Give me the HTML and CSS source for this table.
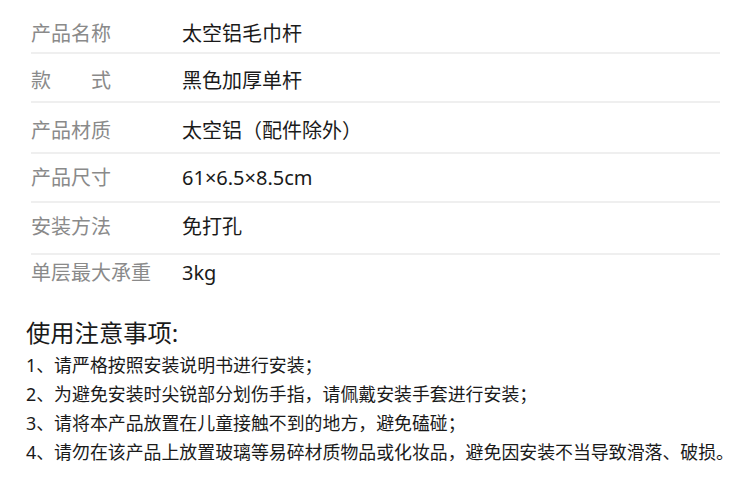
FILE: index.html
```html
<!DOCTYPE html>
<html lang="zh-CN">
<head>
<meta charset="utf-8">
<title>产品参数</title>
<link rel="stylesheet" href="styles.css">
</head>
<body>
<div class="page">
  <div class="spec">
    <div class="row"><span class="label">产品名称</span><span class="value">太空铝毛巾杆</span></div>
    <div class="row"><span class="label">款　　式</span><span class="value">黑色加厚单杆</span></div>
    <div class="row"><span class="label">产品材质</span><span class="value">太空铝（配件除外）</span></div>
    <div class="row"><span class="label">产品尺寸</span><span class="value">61×6.5×8.5cm</span></div>
    <div class="row"><span class="label">安装方法</span><span class="value">免打孔</span></div>
    <div class="row"><span class="label">单层最大承重</span><span class="value">3kg</span></div>
  </div>
  <div class="notes">
    <h2 class="notes-title">使用注意事项:</h2>
    <ol class="notes-list">
      <li>1、请严格按照安装说明书进行安装；</li>
      <li>2、为避免安装时尖锐部分划伤手指，请佩戴安装手套进行安装；</li>
      <li>3、请将本产品放置在儿童接触不到的地方，避免磕碰；</li>
      <li>4、请勿在该产品上放置玻璃等易碎材质物品或化妆品，避免因安装不当导致滑落、破损。</li>
    </ol>
  </div>
</div>
</body>
</html>
```

FILE: styles.css
```css
html, body {
  margin: 0;
  padding: 0;
  background: #ffffff;
}

body {
  font-family: "Noto Sans", "Noto Sans CJK SC", sans-serif;
  color: #1e1e1e;
}

.page {
  width: 750px;
}

.spec {
  margin-left: 31px;
  width: 689px;
  display: flex;
  flex-direction: column;
}

.row {
  display: flex;
  align-items: center;
  font-size: 20px;
  line-height: 24px;
  border-bottom: 2px solid #efefef;
}

.row:nth-child(1) { padding: 22px 0 6px; }
.row:nth-child(2) { padding: 15px 0 8px; }
.row:nth-child(3) { padding: 16px 0 9px; }
.row:nth-child(4) { padding: 12px 0 11px; }
.row:nth-child(5) { padding: 12px 0 14px; }
.row:nth-child(6) { padding: 6px 0 0; border-bottom: none; }

.label {
  width: 151px;
  flex: none;
  color: #8a8a8a;
}

.value {
  color: #1a1a1a;
}

.notes {
  margin-top: 33px;
  padding-left: 26px;
}

.notes-title {
  margin: 0 0 3px;
  font-size: 24.3px;
  line-height: 30px;
  font-weight: normal;
  color: #1a1a1a;
}

.notes-list {
  list-style: none;
  margin: 0;
  padding: 0;
  font-size: 17.9px;
  line-height: 29px;
  color: #1a1a1a;
}

.notes-list li {
  white-space: nowrap;
}
```
